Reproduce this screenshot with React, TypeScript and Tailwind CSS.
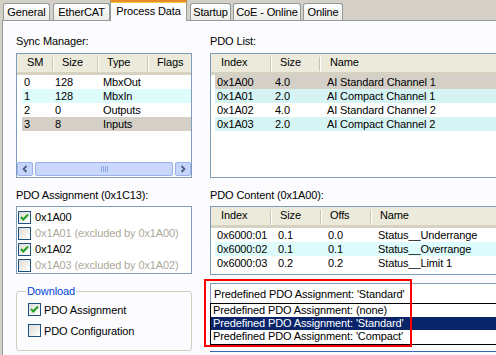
import React from 'react'

const font = "font-['Liberation_Sans',Arial,sans-serif] text-[11px] leading-[14px] tracking-[-0.12px] text-black"

const tabs = [
  { label: 'General', cls: 'ml-[3px] w-[47px]' },
  { label: 'EtherCAT', cls: 'ml-[3px] w-[57px]' },
  { label: 'Process Data', cls: 'w-[77px]', active: true },
  { label: 'Startup', cls: 'ml-[3px] w-[41px]' },
  { label: 'CoE - Online', cls: 'ml-[2px] w-[68px]' },
  { label: 'Online', cls: 'ml-[2px] w-[40px]' },
]

function Sep() {
  return <div className="w-px h-[14px] self-center bg-[#c7c5b2] shadow-[1px_0_0_#fff] shrink-0" />
}

function Check({ checked }: { checked?: boolean }) {
  return (
    <div className="w-[13px] h-[13px] shrink-0 border border-[#1c5180] bg-[linear-gradient(135deg,#dcdcd7,#ffffff)] flex items-center justify-center">
      {checked && (
        <svg width="11" height="11" viewBox="0 0 11 11">
          <path d="M2 5 L4.3 7.5 L9 2.5" fill="none" stroke="#21a121" strokeWidth="2" />
        </svg>
      )}
    </div>
  )
}

function Arrow({ dir }: { dir: 'l' | 'r' }) {
  return (
    <div className="w-[16px] h-[14px] shrink-0 rounded-[2px] border border-[#98b1ec] bg-[#c6d6fb] flex items-center justify-center">
      <svg width="8" height="8" viewBox="0 0 8 8">
        <path d={dir === 'l' ? 'M5.5 1 L2.5 4 L5.5 7' : 'M2.5 1 L5.5 4 L2.5 7'} fill="none" stroke="#4d6185" strokeWidth="1.8" />
      </svg>
    </div>
  )
}

const smRows = [
  ['0', '128', 'MbxOut', ''],
  ['1', '128', 'MbxIn', 'bg-[#dffcfc]'],
  ['2', '0', 'Outputs', ''],
  ['3', '8', 'Inputs', 'bg-[#d4d0c8]'],
]

const pdoRows = [
  ['0x1A00', '4.0', 'AI Standard Channel 1', 'bg-[#d4d0c8]'],
  ['0x1A01', '2.0', 'AI Compact Channel 1', 'bg-[#d7f4f4]'],
  ['0x1A02', '4.0', 'AI Standard Channel 2', ''],
  ['0x1A03', '2.0', 'AI Compact Channel 2', 'bg-[#d7f4f4]'],
]

const contentRows = [
  ['0x6000:01', '0.1', '0.0', 'Status__Underrange', ''],
  ['0x6000:02', '0.1', '0.1', 'Status__Overrange', 'bg-[#dffcfc]'],
  ['0x6000:03', '0.2', '0.2', 'Status__Limit 1', ''],
]

const assign = [
  { label: '0x1A00', checked: true },
  { label: '0x1A01 (excluded by 0x1A00)', dim: true },
  { label: '0x1A02', checked: true },
  { label: '0x1A03 (excluded by 0x1A02)', dim: true },
]

export default function App() {
  return (
    <div className={`${font} w-[496px] h-[355px] overflow-hidden bg-[#d4d0c8] flex flex-col`}>
      {/* Tabs */}
      <div className="relative z-10 h-[21px] flex items-end shrink-0">
        {tabs.map((t) =>
          t.active ? (
            <div
              key={t.label}
              className={`${t.cls} h-[21px] border-x border-t-2 border-x-[#919b9c] border-t-[#e68b2c] shadow-[inset_0_1px_0_#ffc73c] bg-[#fcfcfe] flex items-center justify-center pb-[1px]`}
            >
              {t.label}
            </div>
          ) : (
            <div
              key={t.label}
              className={`${t.cls} h-[17px] mb-px border border-b-0 border-[#919b9c] rounded-t-[3px] bg-[linear-gradient(#ffffff,#ecebe5)] flex items-center justify-center`}
            >
              {t.label}
            </div>
          )
        )}
      </div>

      {/* Panel */}
      <div className="flex-1 ml-[2px] -mt-px border-l border-t border-[#919b9c] bg-[#fcfcfe] flex gap-[18px] pl-[13px] pt-[13px]">
        {/* Left column */}
        <div className="w-[176px] shrink-0 flex flex-col">
          <div className="h-[14px]">Sync Manager:</div>
          <div className="mt-[5px] h-[125px] shrink-0 border border-[#7f9db9] bg-white grid grid-rows-[21px_56px_1fr_14px_1px]">
            <div className="flex bg-[#ebeadb] border-b-[3px] border-[#d6d2c2] pt-[1px]">
              <div className="w-[35px] pl-[10px]">SM</div>
              <Sep />
              <div className="w-[44px] pl-[9px]">Size</div>
              <Sep />
              <div className="w-[49px] pl-[9px]">Type</div>
              <Sep />
              <div className="flex-1 pl-[9px]">Flags</div>
            </div>
            <div className="flex flex-col">
              {smRows.map((r) => (
                <div key={r[0]} className={`ml-[5px] h-[14px] pl-[2px] flex ${r[3]}`}>
                  <div className="w-[31px]">{r[0]}</div>
                  <div className="w-[48px]">{r[1]}</div>
                  <div>{r[2]}</div>
                </div>
              ))}
            </div>
            <div />
            {/* horizontal scrollbar */}
            <div className="flex gap-[2px] bg-[#f7f7f3]">
              <Arrow dir="l" />
              <div className="flex-1 rounded-[2px] border border-[#98b1ec] bg-[#c9d8fc] flex items-center justify-center">
                <svg width="7" height="6" viewBox="0 0 7 6">
                  <path d="M0.5 0 V6 M2.5 0 V6 M4.5 0 V6 M6.5 0 V6" stroke="#8ca8e6" strokeWidth="1" />
                </svg>
              </div>
              <Arrow dir="r" />
            </div>
            <div />
          </div>

          <div className="mt-[10px] h-[14px]">PDO Assignment (0x1C13):</div>
          <div className="mt-[4px] h-[68px] shrink-0 border border-[#7f9db9] bg-white pt-[2px] flex flex-col">
            {assign.map((a) => (
              <div key={a.label} className="h-[16px] pl-[1px] flex items-center gap-[4px]">
                <Check checked={a.checked} />
                <span className={a.dim ? 'text-[#aca899]' : ''}>{a.label}</span>
              </div>
            ))}
          </div>

          <fieldset className="mt-[10px] h-[67px] shrink-0 border border-[#d0d0bf] rounded-[3px] px-[9px]">
            <legend className="px-[1px] text-[#0046d5]">Download</legend>
            <div className="mt-[5px] pl-[2px] flex flex-col gap-[8px]">
              <div className="h-[13px] flex items-center gap-[3px]">
                <Check checked />
                <span>PDO Assignment</span>
              </div>
              <div className="h-[13px] flex items-center gap-[3px]">
                <Check />
                <span>PDO Configuration</span>
              </div>
            </div>
          </fieldset>
        </div>

        {/* Right column */}
        <div className="relative w-[300px] shrink-0 flex flex-col">
          <div className="h-[14px]">PDO List:</div>
          <div className="mt-[5px] h-[125px] shrink-0 border border-[#7f9db9] bg-white flex flex-col">
            <div className="h-[21px] shrink-0 pt-[1px] flex bg-[#ebeadb] border-b-[3px] border-[#d6d2c2]">
              <div className="w-[59px] pl-[10px]">Index</div>
              <Sep />
              <div className="w-[48px] pl-[9px]">Size</div>
              <Sep />
              <div className="flex-1 pl-[10px]">Name</div>
            </div>
            {pdoRows.map((r) => (
              <div key={r[0]} className={`ml-[4px] h-[14px] shrink-0 pl-[2px] flex ${r[3]}`}>
                <div className="w-[58px]">{r[0]}</div>
                <div className="w-[52px]">{r[1]}</div>
                <div>{r[2]}</div>
              </div>
            ))}
          </div>

          <div className="mt-[10px] h-[14px]">PDO Content (0x1A00):</div>
          <div className="mt-[4px] h-[69px] shrink-0 border border-[#7f9db9] bg-white flex flex-col">
            <div className="h-[21px] shrink-0 pt-[1px] flex bg-[#ebeadb] border-b-[3px] border-[#d6d2c2]">
              <div className="w-[59px] pl-[10px]">Index</div>
              <Sep />
              <div className="w-[49px] pl-[9px]">Size</div>
              <Sep />
              <div className="w-[49px] pl-[9px]">Offs</div>
              <Sep />
              <div className="flex-1 pl-[9px]">Name</div>
            </div>
            {contentRows.map((r) => (
              <div key={r[0]} className={`ml-[4px] h-[14px] shrink-0 pl-[2px] flex ${r[4]}`}>
                <div className="w-[61px]">{r[0]}</div>
                <div className="w-[50px]">{r[1]}</div>
                <div className="w-[50px]">{r[2]}</div>
                <div>{r[3]}</div>
              </div>
            ))}
          </div>

          <div className="mt-[8px] h-[21px] shrink-0 border border-[#7f9db9] bg-white pl-[3px] flex items-center">
            Predefined PDO Assignment: 'Standard'
          </div>
          <div className="h-[48px] shrink-0 border-b border-[#3c64b4]" />

          {/* Open drop-down list */}
          <div className="absolute left-0 top-[269px] w-[300px] h-[42px] border border-black bg-white flex flex-col">
            <div className="h-[13px] leading-[13px] pl-[2px]">Predefined PDO Assignment: (none)</div>
            <div className="h-[13px] leading-[13px] pl-[2px] bg-[#0a246a] text-white">Predefined PDO Assignment: 'Standard'</div>
            <div className="h-[13px] leading-[13px] pl-[2px]">Predefined PDO Assignment: 'Compact'</div>
          </div>

          {/* Highlight frame */}
          <div className="absolute left-[-6px] top-[245px] w-[208px] h-[68px] border-2 border-[#ff0000]" />
        </div>
      </div>
    </div>
  )
}
